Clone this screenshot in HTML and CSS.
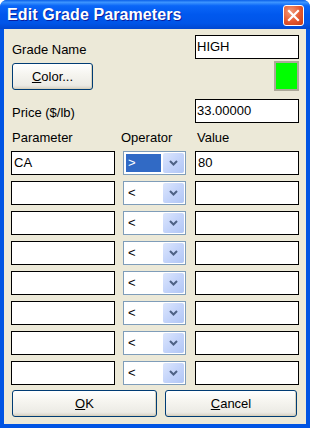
FILE: index.html
```html
<!DOCTYPE html>
<html>
<head>
  <meta charset="UTF-8">
  <title>Edit Grade Parameters</title>
  <link rel="stylesheet" href="styles.css">
</head>
<body>
  <div class="window">
    <div class="titlebar">
      <span class="title">Edit Grade Parameters</span>
      <span class="close-btn">
        <svg width="13" height="13" viewBox="0 0 13 13">
          <path d="M2 2 L11 11 M11 2 L2 11" stroke="#fff" stroke-width="2.2" stroke-linecap="square"/>
        </svg>
      </span>
    </div>

    <div class="content">
      <div class="field-row first">
        <span class="label">Grade Name</span>
        <div class="edit">HIGH</div>
      </div>

      <div class="color-row">
        <button class="xp-button color-button"><u>C</u>olor...</button>
        <span class="swatch"></span>
      </div>

      <div class="field-row price">
        <span class="label">Price ($/lb)</span>
        <div class="edit">33.00000</div>
      </div>

      <div class="grid-head">
        <span>Parameter</span>
        <span class="op-head">Operator</span>
        <span class="val-head">Value</span>
      </div>

      <div class="param-grid">
        <div class="edit">CA</div>
        <div class="combo"><span class="combo-value selected">&gt;</span><span class="combo-btn"></span></div>
        <div class="edit">80</div>

        <div class="edit"></div>
        <div class="combo"><span class="combo-value">&lt;</span><span class="combo-btn"></span></div>
        <div class="edit"></div>

        <div class="edit"></div>
        <div class="combo"><span class="combo-value">&lt;</span><span class="combo-btn"></span></div>
        <div class="edit"></div>

        <div class="edit"></div>
        <div class="combo"><span class="combo-value">&lt;</span><span class="combo-btn"></span></div>
        <div class="edit"></div>

        <div class="edit"></div>
        <div class="combo"><span class="combo-value">&lt;</span><span class="combo-btn"></span></div>
        <div class="edit"></div>

        <div class="edit"></div>
        <div class="combo"><span class="combo-value">&lt;</span><span class="combo-btn"></span></div>
        <div class="edit"></div>

        <div class="edit"></div>
        <div class="combo"><span class="combo-value">&lt;</span><span class="combo-btn"></span></div>
        <div class="edit"></div>

        <div class="edit"></div>
        <div class="combo"><span class="combo-value">&lt;</span><span class="combo-btn"></span></div>
        <div class="edit"></div>
      </div>

      <div class="dialog-buttons">
        <button class="xp-button ok-button"><u>O</u>K</button>
        <button class="xp-button cancel-button"><u>C</u>ancel</button>
      </div>
    </div>
  </div>
</body>
</html>
```

FILE: styles.css
```css
/* Base */
body {
  margin: 0;
  font-family: "Liberation Sans", Arial, sans-serif;
  font-size: 13px;
  color: #000;
}

/* Window frame */
.window {
  width: 310px;
  height: 428px;
  box-sizing: border-box;
  display: flex;
  flex-direction: column;
  background: #0054e3;
  border-radius: 7px 7px 0 0;
  overflow: hidden;
}

.titlebar {
  height: 29px;
  flex: none;
  display: flex;
  align-items: center;
  justify-content: space-between;
  padding: 0 6px 0 7px;
  background: linear-gradient(to bottom, #0a5fe8 0%, #3d95ff 8%, #0a66f7 20%, #0058ee 50%, #0055e8 80%, #0047d0 100%);
}

.title {
  color: #fff;
  font-weight: bold;
  font-size: 16px;
  text-shadow: 1px 1px 0 #0a1e9e;
  letter-spacing: 0.1px;
  padding-top: 1px;
}

.close-btn {
  width: 19px;
  height: 19px;
  border: 1px solid #fff;
  border-radius: 3px;
  background: radial-gradient(circle at 35% 30%, #f19a7a 0%, #e4572f 55%, #c33b16 100%);
  display: flex;
  align-items: center;
  justify-content: center;
  margin-top: 2px;
}

.content {
  flex: 1;
  margin: 0 4px 4px 4px;
  background: #ece9d8;
  padding: 6px 7px 0 7px;
}

/* Labels and edit boxes */
.field-row {
  display: flex;
  justify-content: space-between;
  align-items: center;
}

.field-row .label {
  padding-left: 1px;
  padding-top: 4px;
}

.field-row.price {
  margin-top: 8px;
}

.field-row.price .label {
  padding-top: 3px;
}

.edit {
  width: 104px;
  height: 24px;
  box-sizing: border-box;
  border: 1px solid #000;
  background: #fff;
  padding: 2px 0 0 1px;
  line-height: 18px;
}

.color-row {
  display: flex;
  justify-content: space-between;
  align-items: center;
  margin-top: 2px;
  height: 30px;
}

.swatch {
  width: 25px;
  height: 30px;
  box-sizing: border-box;
  border: 2px solid #aca899;
  background: #00ff00;
}

/* XP style push buttons */
.xp-button {
  font-family: "Liberation Sans", Arial, sans-serif;
  font-size: 13px;
  font-weight: normal;
  color: #000;
  border: 1px solid #003c74;
  border-radius: 3px;
  background: linear-gradient(to bottom, #ffffff 0%, #f6f5f0 40%, #ecebe5 85%, #d6d0c5 100%);
  box-shadow: inset -1px -1px 0 #d8d2bd;
  padding: 0;
  height: 27px;
}

.color-button {
  width: 81px;
  margin-left: 1px;
}

/* Parameter table */
.grid-head {
  display: grid;
  grid-template-columns: 104px 64px 104px;
  column-gap: 8px;
  height: 28px;
  align-items: center;
  padding-left: 1px;
}

.grid-head .op-head {
  margin-left: -3px;
}

.grid-head .val-head {
  margin-left: 1px;
}

.param-grid {
  display: grid;
  grid-template-columns: 104px 64px 104px;
  column-gap: 8px;
  row-gap: 6px;
}

.param-grid .edit {
  padding-left: 2px;
}

.combo {
  width: 63px;
  height: 24px;
  box-sizing: border-box;
  border: 1px solid #7f9db9;
  background: #fff;
  display: flex;
  align-items: stretch;
  padding: 1px;
}

.combo-value {
  flex: 1;
  margin: 1px 2px 1px 1px;
  padding-left: 2px;
  line-height: 18px;
  font-size: 13px;
}

.combo-value.selected {
  background: #316ac5;
  color: #fff;
}

.combo-btn {
  width: 21px;
  border-radius: 2px;
  background-color: #c1d3fb;
  background-image:
    url("data:image/svg+xml;utf8,<svg xmlns='http://www.w3.org/2000/svg' width='9' height='6'><path d='M1 1 L4.5 4.5 L8 1' fill='none' stroke='%234d6185' stroke-width='2'/></svg>"),
    linear-gradient(135deg, #dce6fd 0%, #c4d4fa 50%, #b1c6f5 100%);
  background-repeat: no-repeat;
  background-position: center, 0 0;
}

/* Dialog buttons */
.dialog-buttons {
  display: flex;
  justify-content: space-between;
  margin-top: 5px;
  padding-left: 1px;
  padding-right: 2px;
}

.ok-button {
  width: 145px;
}

.cancel-button {
  width: 132px;
}
```
